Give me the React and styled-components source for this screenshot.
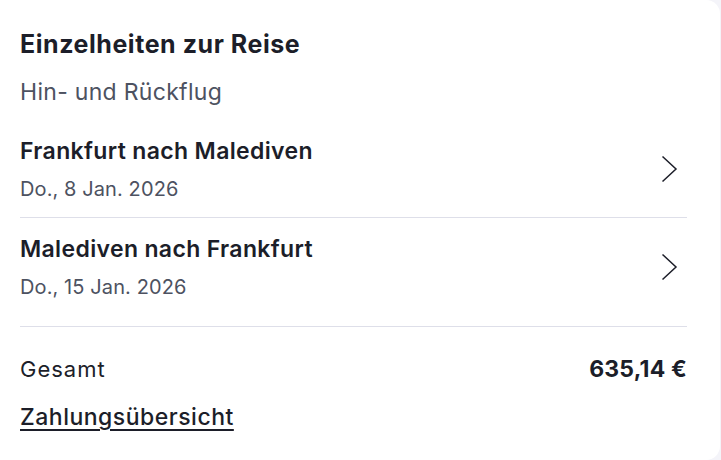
import styled, { createGlobalStyle } from "styled-components";

const GlobalStyle = createGlobalStyle`
  html, body {
    margin: 0;
    padding: 0;
    background: #f4f4f9;
  }
  body {
    font-family: Inter, "Noto Sans", sans-serif;
    color: #1c1e29;
  }
`;

const Card = styled.section`
  width: 720px;
  height: 460px;
  box-sizing: border-box;
  background: #ffffff;
  border-radius: 0 14px 14px 0;
  padding: 28px 33px 0 20px;
  display: flex;
  flex-direction: column;
`;

const Title = styled.h2`
  margin: 0;
  font-size: 25px;
  line-height: 32px;
  font-weight: 650;
  letter-spacing: 0.55px;
`;

const Subtitle = styled.div`
  margin-top: 16.5px;
  font-size: 23px;
  line-height: 30px;
  letter-spacing: 0.3px;
  color: #4d5261;
`;

const Leg = styled.button`
  all: unset;
  display: flex;
  align-items: center;
  justify-content: space-between;
  padding: ${(p) => (p.$first ? "29.5px" : "16.3px")} 0 ${(p) => (p.$last ? "26px" : "14.3px")};
  border-bottom: 1px solid #dedfe9;
  cursor: pointer;
`;

const LegText = styled.div`
  display: flex;
  flex-direction: column;
  gap: 10.3px;
`;

const Route = styled.div`
  font-size: 23px;
  line-height: 30px;
  font-weight: 560;
  letter-spacing: 0.35px;
`;

const TripDate = styled.div`
  font-size: 20px;
  line-height: 26px;
  letter-spacing: 0.1px;
  color: #4d5261;
`;

const Chevron = styled.svg`
  width: 17px;
  height: 28px;
  margin-right: 9px;
  color: #1c1e29;
`;

const TotalRow = styled.div`
  display: flex;
  justify-content: space-between;
  align-items: center;
  margin-top: 27.3px;
  font-size: 22px;
  line-height: 30px;
  letter-spacing: 1px;
`;

const Amount = styled.span`
  font-size: 23px;
  font-weight: 650;
  letter-spacing: 0.2px;
`;

const PaymentLink = styled.a`
  margin-top: 17.3px;
  align-self: flex-start;
  font-size: 23px;
  line-height: 30px;
  font-weight: 500;
  letter-spacing: 0.5px;
  color: #1c1e29;
  text-decoration: underline;
  text-underline-offset: 4px;
  text-decoration-thickness: 2px;
`;

const legs = [
  { route: "Frankfurt nach Malediven", date: "Do., 8 Jan. 2026" },
  { route: "Malediven nach Frankfurt", date: "Do., 15 Jan. 2026" },
];

export default function App() {
  return (
    <>
      <GlobalStyle />
      <Card>
        <Title>Einzelheiten zur Reise</Title>
        <Subtitle>Hin- und Rückflug</Subtitle>
        {legs.map((leg, i) => (
          <Leg key={leg.route} $first={i === 0} $last={i === legs.length - 1}>
            <LegText>
              <Route>{leg.route}</Route>
              <TripDate>{leg.date}</TripDate>
            </LegText>
            <Chevron viewBox="0 0 17 28" fill="none">
              <path d="M1.5 1.5l13.5 12.5L1.5 26.5" stroke="currentColor" strokeWidth="1.5" />
            </Chevron>
          </Leg>
        ))}
        <TotalRow>
          <span>Gesamt</span>
          <Amount>635,14 €</Amount>
        </TotalRow>
        <PaymentLink href="#">Zahlungsübersicht</PaymentLink>
      </Card>
    </>
  );
}
